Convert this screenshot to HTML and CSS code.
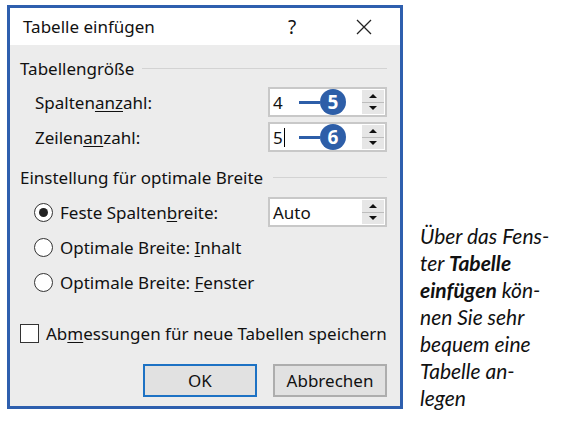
FILE: index.html
```html
<!DOCTYPE html>
<html lang="de">
<head>
<meta charset="utf-8">
<link rel="stylesheet" href="styles.css">
</head>
<body>
<div class="page">
  <div class="dialog">
    <div class="titlebar">
      <span class="title">Tabelle einfügen</span>
      <span class="help">?</span>
      <span class="close">
        <svg width="16" height="16" viewBox="0 0 16 16"><path d="M1 1 L15 15 M15 1 L1 15" stroke="#222" stroke-width="1.3" fill="none"/></svg>
      </span>
    </div>
    <div class="content">
      <div class="group-head"><span>Tabellengröße</span><span class="rule"></span></div>
      <div class="row first">
        <span class="label">Spalten<span class="u">anz</span>ahl:</span>
        <div class="field">
          <span class="val">4</span>
          <span class="callout"><span class="stem"></span><span class="badge">5</span></span>
          <span class="spin"><span class="up"></span><span class="down"></span></span>
        </div>
      </div>
      <div class="row second">
        <span class="label">Zeilen<span class="u">an</span>zahl:</span>
        <div class="field">
          <span class="val">5<span class="caret"></span></span>
          <span class="callout"><span class="stem"></span><span class="badge">6</span></span>
          <span class="spin"><span class="up"></span><span class="down"></span></span>
        </div>
      </div>
      <div class="group-head head2"><span>Einstellung für optimale Breite</span><span class="rule"></span></div>
      <div class="row third">
        <span class="label radio-label"><span class="radio on"></span><span>Feste Spalten<span class="u">b</span>reite:</span></span>
        <div class="field">
          <span class="val">Auto</span>
          <span class="spin"><span class="up"></span><span class="down"></span></span>
        </div>
      </div>
      <div class="opt opt1"><span class="radio"></span><span>Optimale Breite: <span class="u">I</span>nhalt</span></div>
      <div class="opt opt2"><span class="radio"></span><span>Optimale Breite: <span class="u">F</span>enster</span></div>
      <div class="check-row"><span class="checkbox"></span><span>Ab<span class="u">m</span>essungen für neue Tabellen speichern</span></div>
      <div class="buttons">
        <button class="btn default">OK</button>
        <button class="btn">Abbrechen</button>
      </div>
    </div>
  </div>
  <p class="caption">Über das Fens-<br>ter <b>Tabelle</b><br><b>einfügen</b> kön-<br>nen Sie sehr<br>bequem eine<br>Tabelle an-<br>legen</p>
</div>
</body>
</html>
```
FILE: styles.css
```css
* { box-sizing: border-box; }
html, body { margin: 0; padding: 0; background: #fff; }
body { width: 561px; height: 427px; overflow: hidden; }
.page {
  display: flex;
  align-items: flex-start;
  padding: 5px 0 0 7px;
}
.dialog {
  flex: none;
  width: 396px;
  height: 404px;
  border: 3px solid #2e5fae;
  display: flex;
  flex-direction: column;
  font-family: "Noto Sans", "Open Sans", sans-serif;
  font-size: 17px;
  color: #111;
}
.titlebar {
  height: 37px;
  background: #fff;
  display: flex;
  align-items: center;
  padding-left: 13px;
}
.title { font-size: 17px; flex: 1; }
.help { font-size: 19px; width: 20px; margin-right: 54px; text-align: center; }
.close { width: 16px; height: 16px; margin-right: 28px; display: flex; }
.content {
  flex: 1;
  background: #ececec;
  padding: 11px 13px 0 10px;
  display: flex;
  flex-direction: column;
}
.group-head {
  height: 24px;
  display: flex;
  align-items: center;
}
.group-head .rule {
  flex: 1;
  height: 1px;
  background: #d3d3d3;
  margin-left: 8px;
}
.head2 { margin-top: 13px; }
.head2 .rule { margin-left: 10px; }
.row {
  height: 30px;
  display: flex;
  align-items: center;
  justify-content: space-between;
  padding-left: 15px;
}
.row.first { margin-top: 7px; }
.row.second { margin-top: 5px; }
.row.third { margin-top: 8px; padding-left: 14px; }
.u { text-decoration: underline; text-underline-offset: 2px; }
.field {
  width: 119px;
  height: 30px;
  background: #fff;
  border: 2px solid #c8c8c8;
  display: flex;
  align-items: center;
  position: relative;
  padding-left: 3px;
  flex: none;
}
.val { flex: 1; display: flex; align-items: center; }
.caret { display: inline-block; width: 1px; height: 19px; background: #000; margin-left: 1px; }
.spin {
  width: 22px;
  height: 24px;
  margin-right: 1px;
  display: flex;
  flex-direction: column;
  gap: 1px;
  background: #bdbdbd;
}
.spin span {
  flex: 1;
  background: #e6e6e6;
  position: relative;
}
.spin span::after {
  content: "";
  position: absolute;
  left: 50%;
  top: 50%;
  transform: translate(-50%, -50%);
  border-left: 4px solid transparent;
  border-right: 4px solid transparent;
}
.spin .up::after { border-bottom: 4px solid #111; }
.spin .down::after { border-top: 4px solid #111; }
.callout {
  position: absolute;
  left: 29px;
  top: 50%;
  transform: translateY(-50%);
  display: flex;
  align-items: center;
}
.stem { width: 21px; height: 3px; background: #2d5ea8; }
.badge {
  width: 26px;
  height: 26px;
  border-radius: 50%;
  background: #2d5ea8;
  color: #fff;
  font-family: "Open Sans", sans-serif;
  font-weight: 700;
  font-size: 19px;
  display: flex;
  align-items: center;
  justify-content: center;
  line-height: 1;
}
.radio-label { display: flex; align-items: center; }
.radio {
  width: 19px;
  height: 19px;
  border: 1px solid #333;
  border-radius: 50%;
  background: #fff;
  margin-right: 7px;
  position: relative;
  flex: none;
}
.radio.on::after {
  content: "";
  position: absolute;
  left: 4px; top: 4px;
  width: 9px; height: 9px;
  border-radius: 50%;
  background: #222;
}
.opt {
  height: 24px;
  display: flex;
  align-items: center;
  padding-left: 14px;
}
.opt1 { margin-top: 8px; }
.opt2 { margin-top: 11px; }
.check-row {
  height: 24px;
  margin-top: 27px;
  display: flex;
  align-items: center;
}
.checkbox {
  width: 19px;
  height: 19px;
  border: 1px solid #333;
  background: #fff;
  margin-right: 7px;
  flex: none;
}
.buttons {
  margin-top: 19px;
  display: flex;
  justify-content: flex-end;
  gap: 16px;
}
.btn {
  width: 114px;
  height: 33px;
  background: #e1e1e1;
  border: 2px solid #adadad;
  font-family: "Noto Sans", "Open Sans", sans-serif;
  font-size: 17px;
  color: #111;
  padding: 0;
}
.btn.default { border-color: #1d72c4; }
.caption {
  flex: none;
  margin: 217px 0 0 17px;
  white-space: nowrap;
  font-family: "Lato", "Open Sans", sans-serif;
  font-style: italic;
  font-size: 21px;
  line-height: 27px;
  color: #111;
}
.caption b { font-weight: 700; }
```
